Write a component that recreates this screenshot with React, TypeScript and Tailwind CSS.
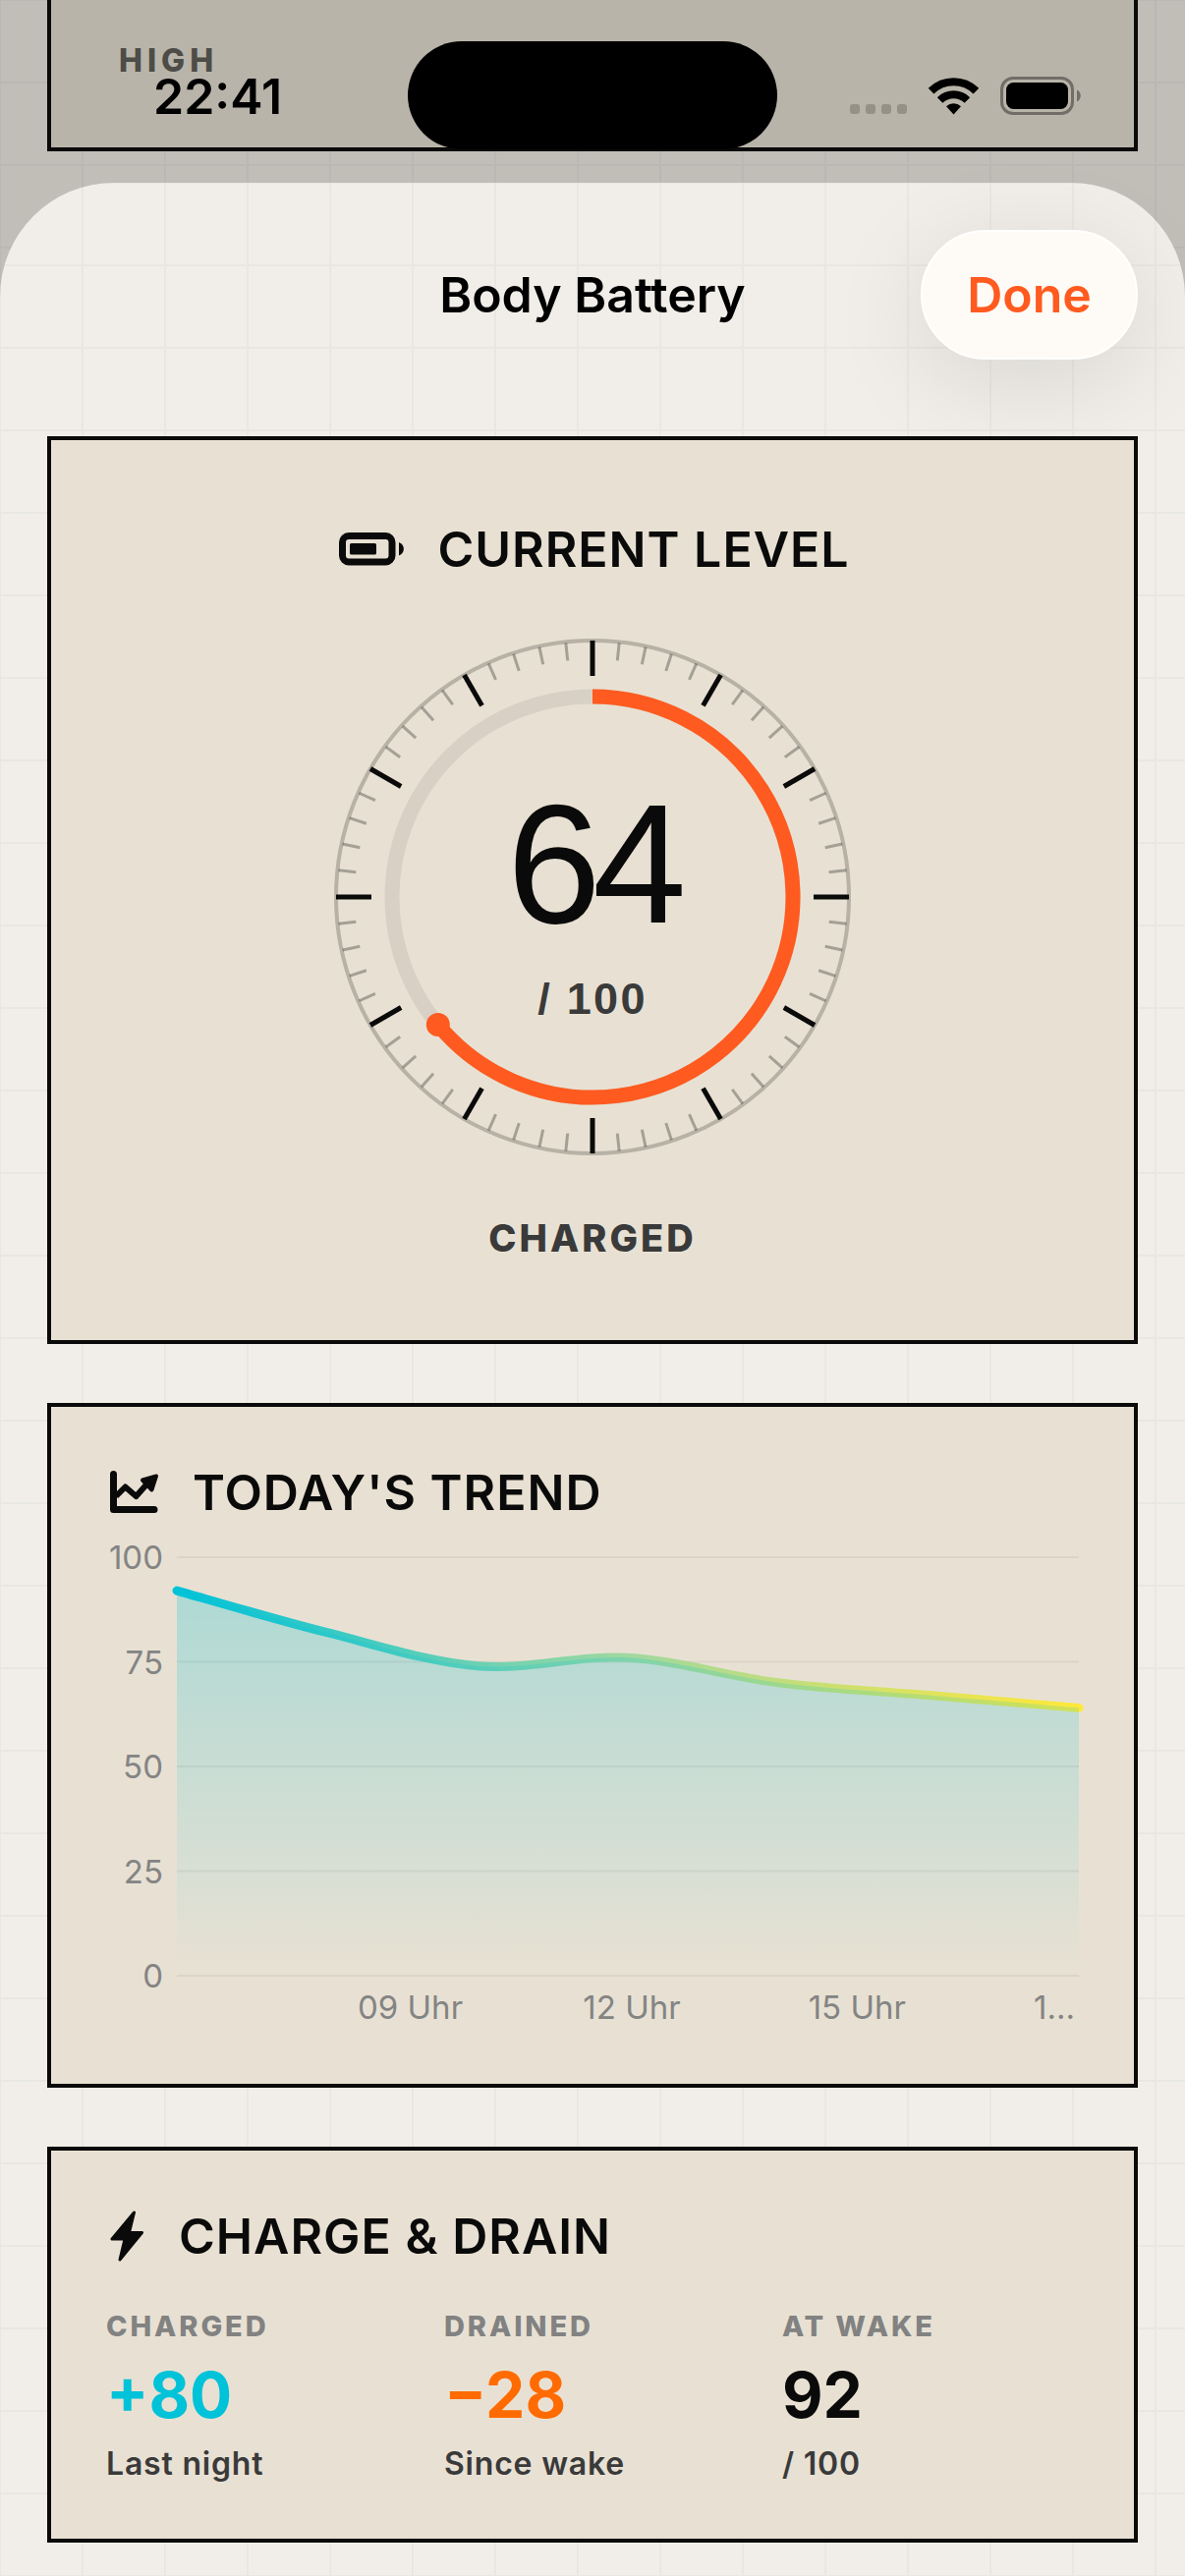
import React from "react";

const TREND = [92, 82, 74, 76, 70, 67, 64];
const PLOT_WIDTH = 918;
const PLOT_HEIGHT = 426;

const gridLight =
  "bg-[#f1eee9] bg-[linear-gradient(to_right,#e8e7e2_2px,transparent_2px),linear-gradient(to_bottom,#e8e7e2_2px,transparent_2px)] bg-[size:84px_84px] bg-[position:-1px_-1px]";
const gridDim =
  "bg-[#c1bdb7] bg-[linear-gradient(to_right,#b9b8b4_2px,transparent_2px),linear-gradient(to_bottom,#b9b8b4_2px,transparent_2px)] bg-[size:84px_84px] bg-[position:-1px_-1px]";

// Catmull-Rom spline through the trend values, as cubic beziers
const trendPath = (values: number[]) => {
  const pts = values.map((v, i) => [
    (i * PLOT_WIDTH) / (values.length - 1),
    PLOT_HEIGHT * (1 - v / 100),
  ]);
  let d = `M${pts[0][0]} ${pts[0][1]}`;
  for (let i = 0; i < pts.length - 1; i++) {
    const p0 = pts[i - 1] ?? pts[i];
    const p1 = pts[i];
    const p2 = pts[i + 1];
    const p3 = pts[i + 2] ?? p2;
    d += ` C${p1[0] + (p2[0] - p0[0]) / 6} ${p1[1] + (p2[1] - p0[1]) / 6} ${
      p2[0] - (p3[0] - p1[0]) / 6
    } ${p2[1] - (p3[1] - p1[1]) / 6} ${p2[0]} ${p2[1]}`;
  }
  return d;
};

const StatusBar: React.FC = () => (
  <div className="absolute inset-x-0 top-0 h-[152px]">
    <div className="absolute left-1/2 top-[42px] h-[110px] w-[376px] -translate-x-1/2 rounded-full bg-black" />
    <div className="flex items-center justify-between pl-[156px] pr-[106px] pt-[78px]">
      <span className="text-[50px] font-semibold leading-[40px] text-black">
        22:41
      </span>
      <div className="flex items-center gap-[22px]">
        <div className="flex gap-[6px] pt-[26px]">
          {[0, 1, 2, 3].map((i) => (
            <span key={i} className="size-[10px] rounded-[3px] bg-[#969187]" />
          ))}
        </div>
        <svg width="51" height="38" viewBox="0 0 51 38" aria-label="Wi-Fi">
          <g fill="none" stroke="#000" strokeWidth="8">
            <path d="M2.6 13.6a32.5 32.5 0 0 1 45.8 0" />
            <path d="M11.6 23a19.8 19.8 0 0 1 27.8 0" />
          </g>
          <path d="M25.5 37.5l-7.5-8.2a11 11 0 0 1 15 0z" />
        </svg>
        <svg width="82" height="40" viewBox="0 0 82 40" aria-label="Battery">
          <rect x="1.5" y="1.5" width="72" height="36" rx="11.5" fill="none" stroke="#716e67" strokeWidth="3" />
          <rect x="6" y="6" width="63" height="27" rx="7.5" />
          <path d="M78 13.5c5 2 5 10 0 12z" fill="#716e67" />
        </svg>
      </div>
    </div>
  </div>
);

const BatteryIcon = () => (
  <svg width="66" height="34" viewBox="0 0 66 34" fill="#0a0a0a" aria-hidden="true">
    <rect x="3.5" y="3.5" width="50.5" height="26.5" rx="6.5" fill="none" stroke="#0a0a0a" strokeWidth="7" />
    <rect x="11" y="11" width="27" height="11.5" rx="1.5" />
    <path d="M61 10c6.5 2.5 6.5 11 0 13.5z" />
  </svg>
);

const TrendIcon = () => (
  <svg width="50" height="44" viewBox="0 0 50 44" fill="none" stroke="#0a0a0a" aria-hidden="true">
    <path d="M3.5 3.5V39.500H45" strokeWidth="7" strokeLinecap="round" strokeLinejoin="round" />
    <path d="M6 26l9.500-9.500 11 9.500L38 13" strokeWidth="6" strokeLinejoin="round" />
    <path d="M33 9.500l14-4-4.500 14z" fill="#0a0a0a" strokeWidth="4" strokeLinejoin="round" />
  </svg>
);

const BoltIcon = () => (
  <svg width="36" height="52" viewBox="0 0 36 52" fill="#0a0a0a" stroke="#0a0a0a" aria-hidden="true">
    <path d="M24.5 2L2 29H15L10 50 32.5 22.500H19.500z" strokeWidth="3" strokeLinejoin="round" />
  </svg>
);

interface CardTitleProps {
  icon: React.ReactNode;
  children: React.ReactNode;
}

const CardTitle: React.FC<CardTitleProps> = ({ icon, children }) => (
  <div className="flex items-center gap-[34px] pl-1">
    {icon}
    <h2 className="text-[50px] font-semibold leading-[62px] tracking-[1px] text-[#0a0a0a]">
      {children}
    </h2>
  </div>
);

const Gauge: React.FC<{ value: number }> = ({ value }) => {
  const angle = (value / 100) * 2 * Math.PI;
  const endX = 263 + 204 * Math.sin(angle);
  const endY = 263 - 204 * Math.cos(angle);

  return (
    <div className="relative mt-[60px] size-[526px]">
      <svg viewBox="0 0 526 526" className="size-full" aria-hidden="true">
        <circle cx="263" cy="263" r="261" fill="none" stroke="#0a0a0a" strokeOpacity="0.22" strokeWidth="4" />
        {Array.from({ length: 60 }, (_, i) => {
          const major = i % 5 === 0;
          return (
            <line
              key={i}
              x1="263"
              x2="263"
              y1={major ? 2 : 3}
              y2={major ? 38 : 21}
              stroke="#0a0a0a"
              strokeOpacity={major ? 1 : 0.3}
              strokeWidth={major ? 5 : 3}
              transform={`rotate(${i * 6} 263 263)`}
            />
          );
        })}
        <circle cx="263" cy="263" r="204" fill="none" stroke="#d8d0c5" strokeWidth="15" />
        <path
          d={`M263 59A204 204 0 ${value > 50 ? 1 : 0} 1 ${endX} ${endY}`}
          fill="none"
          stroke="#ff5a1f"
          strokeWidth="15"
        />
        <circle cx={endX} cy={endY} r="12" fill="#ff5a1f" />
      </svg>
      <div className="absolute inset-0 flex flex-col items-center pt-[133px] font-['Liberation_Sans',sans-serif]">
        <span className="text-[172px] leading-[192px] tracking-tighter text-[#0a0a0a]">
          {value}
        </span>
        <span className="mt-4 text-[45px] font-bold leading-[52px] tracking-wider text-[#3a3a3a]">
          / 100
        </span>
      </div>
    </div>
  );
};

const TrendChart: React.FC = () => {
  const line = trendPath(TREND);

  return (
    <div className="mt-[15px] flex gap-[14px]">
      <div className="flex h-[466px] w-[58px] flex-col justify-between text-right text-[33px] leading-[40px] text-[#848484]">
        {[100, 75, 50, 25, 0].map((v) => (
          <span key={v}>{v}</span>
        ))}
      </div>
      <div className="min-w-0 flex-1 pt-5">
        <svg
          viewBox={`0 0 ${PLOT_WIDTH} ${PLOT_HEIGHT}`}
          preserveAspectRatio="none"
          className="block h-[426px] w-full overflow-visible"
          role="img"
          aria-label="Body battery level today"
        >
          <defs>
            <linearGradient id="line" gradientUnits="userSpaceOnUse" x1="0" y1="0" x2={PLOT_WIDTH} y2="0">
              <stop offset="0" stopColor="#00c2d8" />
              <stop offset="0.5" stopColor="#a0d8a0" />
              <stop offset="1" stopColor="#ffe83a" />
            </linearGradient>
            <linearGradient id="area" gradientUnits="userSpaceOnUse" x1="0" y1="34" x2="0" y2={PLOT_HEIGHT}>
              <stop offset="0" stopColor="#00c2d8" stopOpacity="0.25" />
              <stop offset="1" stopColor="#00c2d8" stopOpacity="0" />
            </linearGradient>
          </defs>
          {[0, 25, 50, 75, 100].map((v) => (
            <line
              key={v}
              x1="0"
              x2={PLOT_WIDTH}
              y1={(PLOT_HEIGHT * v) / 100}
              y2={(PLOT_HEIGHT * v) / 100}
              stroke="#0a0a0a"
              strokeOpacity="0.06"
              strokeWidth="2"
            />
          ))}
          <path d={line} fill="none" stroke="url(#line)" strokeWidth="9" strokeLinecap="round" />
          <path d={`${line} V${PLOT_HEIGHT} H0 Z`} fill="url(#area)" />
        </svg>
        <div className="mt-[11px] flex pl-[184px] text-[33px] leading-[42px] text-[#848484]">
          {["09 Uhr", "12 Uhr", "15 Uhr"].map((label) => (
            <span key={label} className="flex-1">
              {label}
            </span>
          ))}
          <span className="w-[46px]">1...</span>
        </div>
      </div>
    </div>
  );
};

interface StatProps {
  label: string;
  value: string;
  note: string;
  valueClass: string;
}

const Stat: React.FC<StatProps> = ({ label, value, note, valueClass }) => (
  <div className="flex flex-col">
    <span className="text-[29px] font-extrabold leading-[40px] tracking-widest text-[#828282]">
      {label}
    </span>
    <span className={`mt-3 text-[64px] font-bold leading-[76px] ${valueClass}`}>
      {value}
    </span>
    <span className="mt-3 text-[32px] font-semibold leading-[40px] tracking-wide text-[#3a3a3a]">
      {note}
    </span>
  </div>
);

const App: React.FC = () => {
  return (
    <div
      className={`relative flex min-h-screen flex-col font-['Inter',sans-serif] ${gridDim}`}
    >
      <div className="h-[186px]">
        <div className="mx-12 h-[154px] border-4 border-t-0 border-[#0a0a0a] bg-[#b9b4a9] pl-[69px] pt-12">
          <span className="block text-[32px] font-extrabold leading-[28px] tracking-[5px] text-[#4d4c47]">
            HIGH
          </span>
        </div>
      </div>
      <StatusBar />

      <main className={`flex-1 rounded-t-[116px] px-12 pb-[34px] ${gridLight}`}>
        <header className="grid h-[258px] grid-cols-[1fr_auto_1fr] items-start pt-12">
          <h1 className="col-start-2 text-[50px] font-semibold leading-[132px] text-black">
            Body Battery
          </h1>
          <button
            type="button"
            className="h-[132px] w-[221px] justify-self-end rounded-full border-2 border-white bg-[#fefbf6] text-[50px] font-semibold text-[#ff5a1f] shadow-[0_20px_100px_rgba(0,0,0,0.1)]"
          >
            Done
          </button>
        </header>

        <div className="flex flex-col gap-[60px]">
          <section className="flex flex-col items-center border-4 border-[#0a0a0a] bg-[#e8e1d3] py-20">
            <CardTitle icon={<BatteryIcon />}>CURRENT LEVEL</CardTitle>
            <Gauge value={64} />
            <p className="mt-[60px] text-[38px] font-extrabold leading-[48px] tracking-[3px] text-[#3a3a3a]">
              CHARGED
            </p>
          </section>

          <section className="border-4 border-[#0a0a0a] bg-[#e8e1d3] px-14 pb-[57px] pt-14">
            <CardTitle icon={<TrendIcon />}>TODAY'S TREND</CardTitle>
            <TrendChart />
          </section>

          <section className="border-4 border-[#0a0a0a] bg-[#e8e1d3] p-14">
            <CardTitle icon={<BoltIcon />}>CHARGE &amp; DRAIN</CardTitle>
            <div className="mt-[41px] grid grid-cols-3 gap-[42px]">
              <Stat label="CHARGED" value="+80" note="Last night" valueClass="text-[#00c2d8]" />
              <Stat label="DRAINED" value="−28" note="Since wake" valueClass="text-[#ff6b00]" />
              <Stat label="AT WAKE" value="92" note="/ 100" valueClass="text-[#0a0a0a]" />
            </div>
          </section>
        </div>
      </main>
    </div>
  );
};

export default App;
